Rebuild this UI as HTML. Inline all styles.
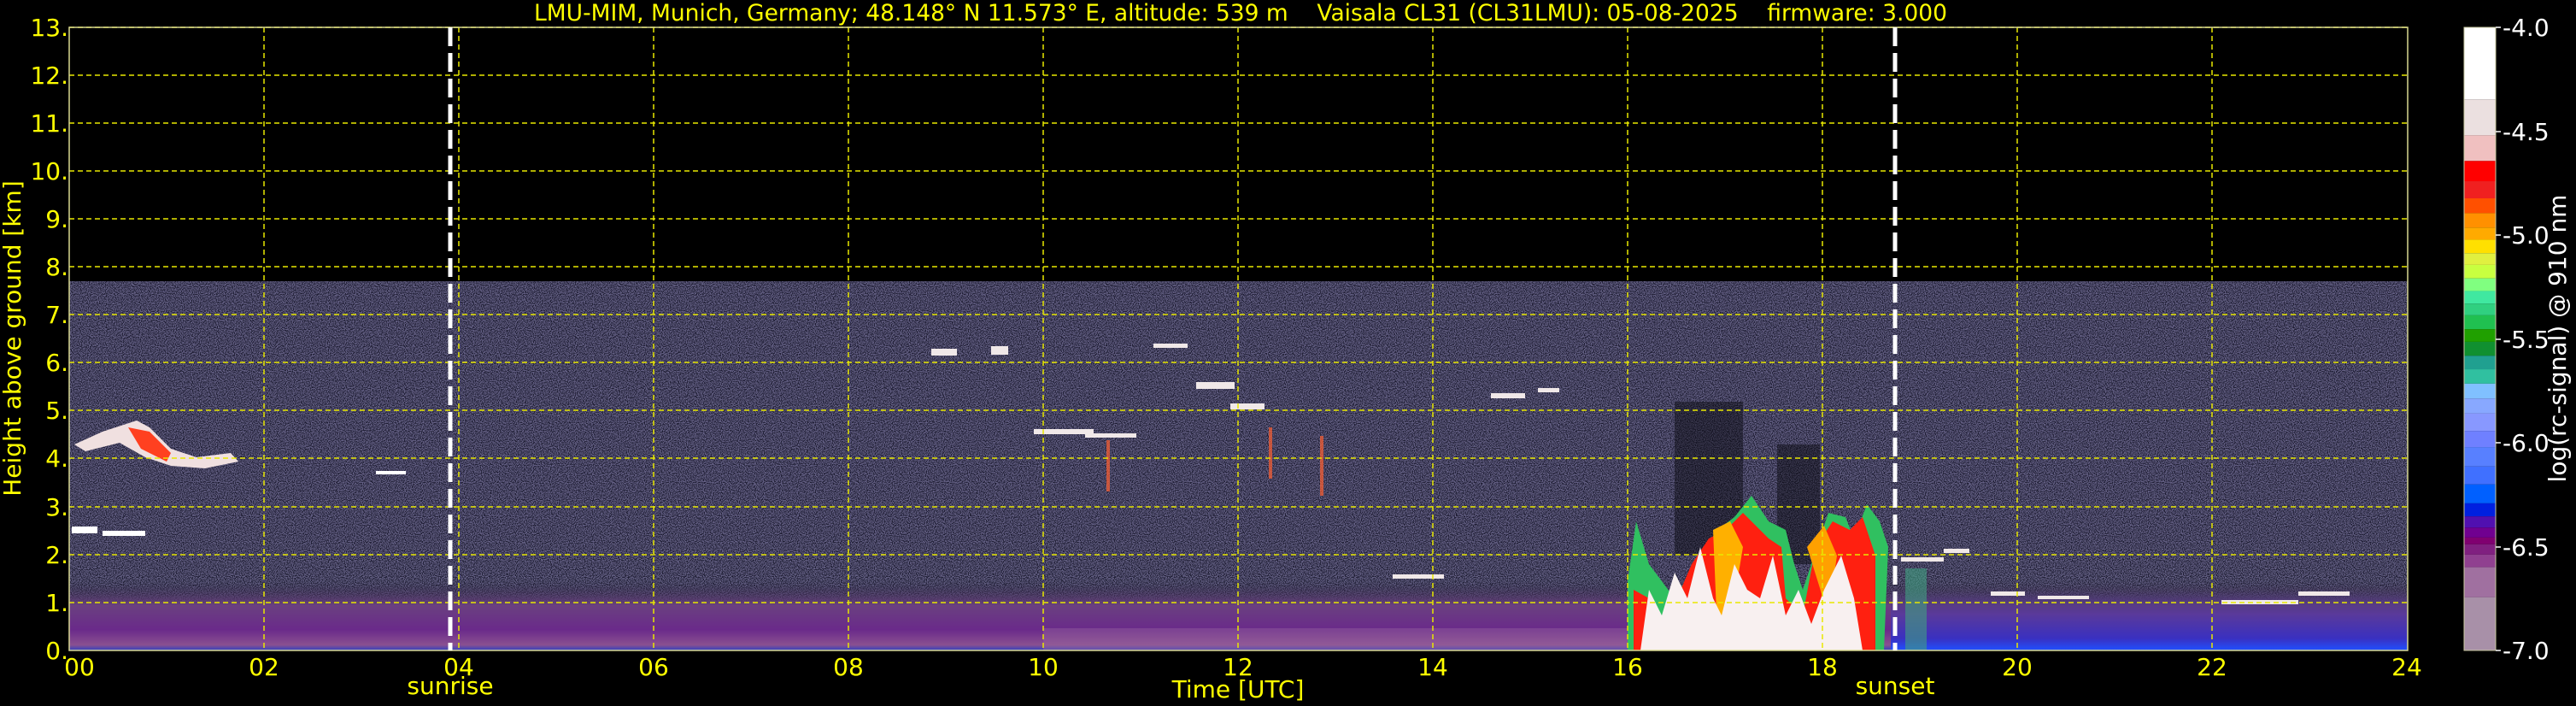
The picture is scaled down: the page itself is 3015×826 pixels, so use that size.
<!DOCTYPE html>
<html><head><meta charset="utf-8"><style>
html,body{margin:0;padding:0;background:#000;}
body{width:3015px;height:826px;overflow:hidden;position:relative;font-family:"DejaVu Sans","Liberation Sans",sans-serif;}
svg{position:absolute;left:0;top:0;}
</style></head><body>
<svg width="3015" height="826" viewBox="0 0 3015 826" xmlns="http://www.w3.org/2000/svg">
<defs>
<filter id="spk" x="0" y="0" width="100%" height="100%">
<feTurbulence type="fractalNoise" baseFrequency="0.9" numOctaves="1" seed="3" result="n"/>
<feColorMatrix in="n" type="matrix" values="0 0 0 0 0.55  0 0 0 0 0.5  0 0 0 0 0.9  0 0 0 -6 3.6"/>
</filter>
<linearGradient id="low" x1="0" y1="0" x2="0" y2="1">
<stop offset="0" stop-color="#2a2640" stop-opacity="0"/>
<stop offset="0.35" stop-color="#6a4080"/>
<stop offset="0.7" stop-color="#6a2a8a"/>
<stop offset="0.92" stop-color="#8a5090"/>
<stop offset="1" stop-color="#3040c0"/>
</linearGradient>
<linearGradient id="lowb" x1="0" y1="0" x2="0" y2="1">
<stop offset="0" stop-color="#3a3a70" stop-opacity="0"/>
<stop offset="0.4" stop-color="#5a3a9a"/>
<stop offset="0.8" stop-color="#3a30c0"/>
<stop offset="1" stop-color="#2050ff"/>
</linearGradient>
</defs>
<rect x="81" y="329" width="2737" height="432" fill="#1e1d33"/>
<rect x="81" y="329" width="2737" height="432" filter="url(#spk)" opacity="0.42"/>
<rect x="1960" y="470" width="80" height="180" fill="#0c0c14" opacity="0.5"/>
<rect x="2080" y="520" width="50" height="140" fill="#0c0c14" opacity="0.5"/>
<rect x="81" y="680" width="2737" height="81" fill="url(#low)"/>
<rect x="1221" y="735" width="684" height="26" fill="#9a6aa0" opacity="0.4"/>
<rect x="2213" y="690" width="605" height="71" fill="url(#lowb)"/>
<path d="M87 520 L120 505 L160 492 L175 500 L200 525 L230 535 L270 530 L279 540 L240 548 L200 545 L170 535 L140 518 L100 528 Z" fill="#f0e0e0"/>
<path d="M150 500 L175 505 L200 530 L195 540 L165 525 Z" fill="#ff4020"/>
<rect x="84" y="616" width="30" height="8" fill="#fff"/><rect x="120" y="621" width="50" height="6" fill="#fff"/>
<rect x="440" y="551" width="35" height="4" fill="#fff"/>
<g fill="#f0e8e8">
<rect x="1090" y="408" width="30" height="8"/><rect x="1160" y="405" width="20" height="10"/>
<rect x="1210" y="502" width="70" height="6"/><rect x="1270" y="507" width="60" height="5"/>
<rect x="1350" y="402" width="40" height="5"/><rect x="1400" y="447" width="45" height="8"/>
<rect x="1440" y="472" width="40" height="7"/><rect x="1745" y="460" width="40" height="6"/>
<rect x="1800" y="454" width="25" height="5"/><rect x="1630" y="672" width="60" height="5"/>
</g>
<g fill="#ff6030" opacity="0.7">
<rect x="1485" y="500" width="4" height="60"/><rect x="1545" y="510" width="4" height="70"/><rect x="1295" y="515" width="4" height="60"/>
</g>
<path d="M1905 761 L1905 680 L1915 610 L1930 660 L1960 700 L1990 650 L2010 620 L2030 605 L2050 580 L2070 610 L2090 620 L2100 660 L2110 690 L2120 660 L2140 600 L2160 605 L2170 630 L2185 590 L2200 610 L2210 640 L2205 761 Z" fill="#30c060"/>
<path d="M1912 761 L1912 690 L1930 700 L1950 730 L1980 660 L2000 630 L2020 620 L2040 600 L2055 615 L2070 630 L2085 640 L2090 700 L2110 720 L2125 640 L2145 610 L2165 620 L2180 605 L2195 650 L2195 761 Z" fill="#ff2010"/>
<path d="M2005 620 L2025 610 L2040 640 L2030 700 L2010 740 Z" fill="#ffb000"/>
<path d="M2115 640 L2135 615 L2150 650 L2140 720 Z" fill="#ffa000"/>
<path d="M1920 761 L1930 690 L1945 720 L1960 670 L1975 700 L1990 640 L2005 700 L2015 720 L2030 660 L2045 690 L2060 700 L2075 650 L2090 720 L2105 690 L2120 730 L2135 690 L2155 650 L2170 700 L2180 761 Z" fill="#f8f0f0"/>
<g fill="#f0e8e8">
<rect x="2225" y="652" width="50" height="5"/><rect x="2275" y="642" width="30" height="5"/>
<rect x="2330" y="692" width="40" height="5"/><rect x="2385" y="697" width="60" height="4"/>
<rect x="2600" y="702" width="90" height="5"/><rect x="2690" y="692" width="60" height="5"/>
</g>
<rect x="2230" y="665" width="25" height="96" fill="#40a080" opacity="0.6"/>
<g stroke="#e8e800" stroke-width="1.5" stroke-dasharray="6 4" fill="none">
<path d="M81 32H2818M81 88H2818M81 144H2818M81 200H2818M81 256H2818M81 312H2818M81 368H2818M81 424H2818M81 480H2818M81 536H2818M81 593H2818M81 649H2818M81 705H2818"/>
<path d="M309 32V761M537 32V761M765 32V761M993 32V761M1221 32V761M1449 32V761M1677 32V761M1905 32V761M2133 32V761M2361 32V761M2589 32V761"/>
</g>
<rect x="81" y="32" width="2737" height="729" fill="none" stroke="#d8d890" stroke-width="1.5"/>
<g stroke="#fff" stroke-width="5" stroke-dasharray="22 8">
<path d="M527 32V761"/><path d="M2218 32V761"/>
</g>
<g fill="#ffff00" font-size="28" text-anchor="end">
<text x="80" y="771">0.</text><text x="80" y="715">1.</text><text x="80" y="659">2.</text><text x="80" y="603">3.</text><text x="80" y="546">4.</text><text x="80" y="490">5.</text><text x="80" y="434">6.</text><text x="80" y="378">7.</text><text x="80" y="322">8.</text><text x="80" y="266">9.</text><text x="80" y="210">10.</text><text x="80" y="154">11.</text><text x="80" y="98">12.</text><text x="80" y="42">13.</text>
</g>
<text transform="translate(24 396) rotate(-90)" fill="#ffff00" font-size="28" text-anchor="middle">Height above ground [km]</text>
<g fill="#ffff00" font-size="28" text-anchor="middle">
<text x="93" y="790">00</text><text x="309" y="790">02</text><text x="537" y="790">04</text><text x="765" y="790">06</text><text x="993" y="790">08</text><text x="1221" y="790">10</text><text x="1449" y="790">12</text><text x="1677" y="790">14</text><text x="1905" y="790">16</text><text x="2133" y="790">18</text><text x="2361" y="790">20</text><text x="2589" y="790">22</text><text x="2817" y="790">24</text>
<text x="527" y="812">sunrise</text><text x="2218" y="812">sunset</text>
<text x="1449" y="816">Time [UTC]</text>
</g>
<text x="1452" y="24" fill="#ffff00" font-size="26.5" text-anchor="middle" xml:space="preserve">LMU-MIM, Munich, Germany; 48.148° N 11.573° E, altitude: 539 m    Vaisala CL31 (CL31LMU): 05-08-2025    firmware: 3.000</text>
<svg x="2884" y="32" width="37" height="729" viewBox="0 60 1 1385" preserveAspectRatio="none">
<rect y="60" width="1" height="160" fill="#ffffff"/><rect y="220" width="1" height="80" fill="#ebe0e0"/><rect y="300" width="1" height="57" fill="#f0c0c0"/><rect y="357" width="1" height="45" fill="#ff0000"/><rect y="402" width="1" height="38" fill="#f02020"/><rect y="440" width="1" height="33" fill="#ff5000"/><rect y="473" width="1" height="32" fill="#ff9000"/><rect y="505" width="1" height="27" fill="#ffaa00"/><rect y="532" width="1" height="30" fill="#ffe000"/><rect y="562" width="1" height="26" fill="#e0f040"/><rect y="588" width="1" height="30" fill="#c8ff40"/><rect y="618" width="1" height="28" fill="#80ff80"/><rect y="646" width="1" height="28" fill="#40e8a0"/><rect y="674" width="1" height="26" fill="#30d080"/><rect y="700" width="1" height="31" fill="#20c050"/><rect y="731" width="1" height="28" fill="#20a000"/><rect y="759" width="1" height="31" fill="#109030"/><rect y="790" width="1" height="30" fill="#20a090"/><rect y="820" width="1" height="32" fill="#30c0a0"/><rect y="852" width="1" height="33" fill="#80c0ff"/><rect y="885" width="1" height="33" fill="#88a8ff"/><rect y="918" width="1" height="39" fill="#8898ff"/><rect y="957" width="1" height="36" fill="#6f80ff"/><rect y="993" width="1" height="43" fill="#5880ff"/><rect y="1036" width="1" height="40" fill="#4070ff"/><rect y="1076" width="1" height="42" fill="#0060ff"/><rect y="1118" width="1" height="29" fill="#0020e0"/><rect y="1147" width="1" height="25" fill="#5010b0"/><rect y="1172" width="1" height="22" fill="#700090"/><rect y="1194" width="1" height="15" fill="#800070"/><rect y="1209" width="1" height="23" fill="#802080"/><rect y="1232" width="1" height="28" fill="#904090"/><rect y="1260" width="1" height="67" fill="#a070a0"/><rect y="1327" width="1" height="118" fill="#a890a8"/>
</svg>
<rect x="2884" y="32" width="37" height="729" fill="none" stroke="#c8c8a0" stroke-width="1"/>
<g stroke="#fff" stroke-width="1.5"><path d="M2921 32h6M2921 154h6M2921 275h6M2921 397h6M2921 518h6M2921 640h6M2921 761h6"/></g>
<g fill="#fff" font-size="28">
<text x="2929" y="42">-4.0</text><text x="2929" y="164">-4.5</text><text x="2929" y="285">-5.0</text><text x="2929" y="407">-5.5</text><text x="2929" y="528">-6.0</text><text x="2929" y="650">-6.5</text><text x="2929" y="771">-7.0</text>
</g>
<text transform="translate(3003 396) rotate(-90)" fill="#fff" font-size="28" text-anchor="middle">log(rc-signal) @ 910 nm</text>
</svg>
</body></html>
